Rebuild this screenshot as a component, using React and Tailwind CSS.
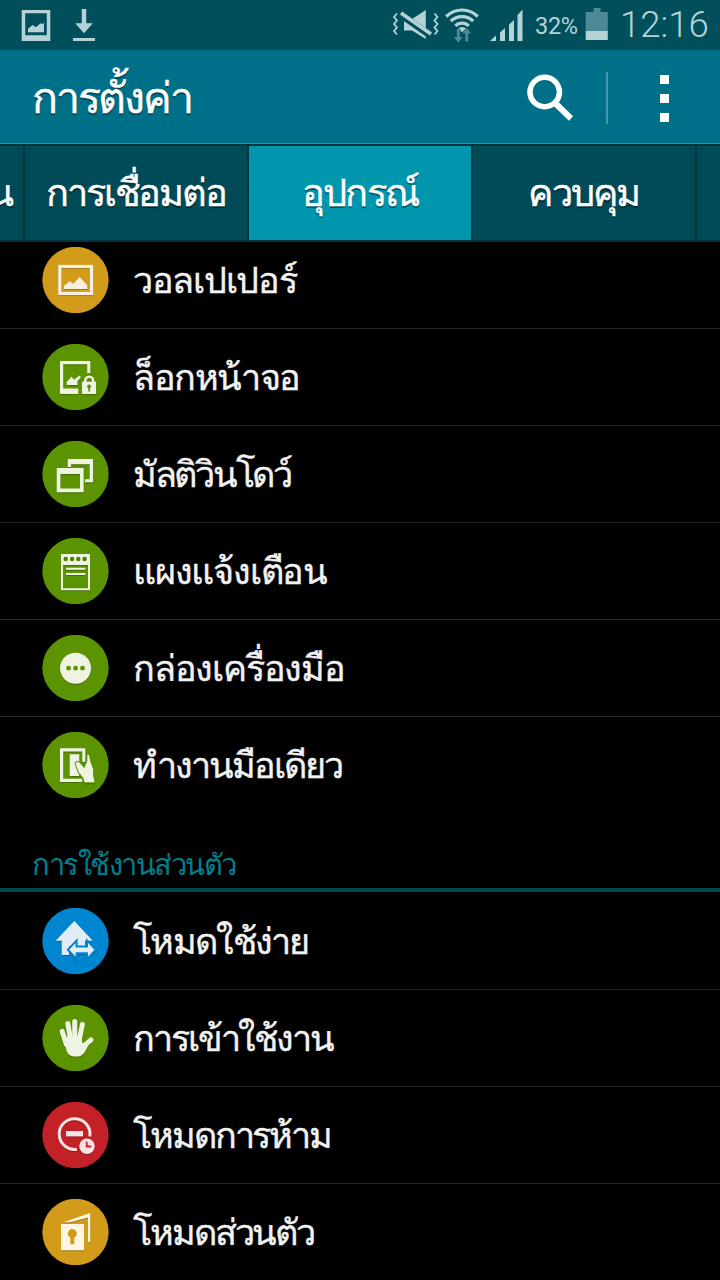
import React from 'react';

const GREEN = '#5b9400';
const AMBER = '#d39b1a';
const BLUE = '#0086d1';
const RED = '#c22227';
const WHITE = '#eef3e2';

/**
 * Round settings icon. Children are drawn in a 67x66 box over the coloured
 * disc, with a thin shadow below them.
 */
function Badge({ color, children }) {
  return (
    <svg className="h-[66px] w-[67px] shrink-0" viewBox="0 0 67 66">
      <circle cx="33.5" cy="33" r="33.2" fill={color} />
      <g className="drop-shadow-[0_1px_0_rgba(0,0,0,0.25)]">{children}</g>
    </svg>
  );
}

function WallpaperIcon() {
  return (
    <Badge color={AMBER}>
      <rect x="17.8" y="19.5" width="31.7" height="27" fill="none" stroke="#f8f0dc" strokeWidth="3.2" />
      <path d="M22 42v-3l5.7-4.7 3.6 2.4L37.7 30l7.6 8.3V42z" fill="#f8f0dc" />
    </Badge>
  );
}

function LockScreenIcon() {
  return (
    <Badge color={GREEN}>
      <path d="M18 17h30.3v12.3h-3.1v-9.1H21.2v24.2h15.1V50H18z" fill={WHITE} />
      <path d="M24.7 41v-3l4.8-5.2 2.6 3 3-2.6 2.6-1.6 1.2 1.6-1.8 2.4-1.6 1.4V41z" fill={WHITE} />
      <path d="M43.3 38v-1.4a3.9 3.9 0 0 1 7.8 0V38" fill="none" stroke={WHITE} strokeWidth="2.6" />
      <rect x="40" y="37.7" width="14" height="12.3" fill={WHITE} />
      <circle cx="47.1" cy="42.4" r="1.9" fill={GREEN} />
      <path d="M46.3 43h1.7v4.4h-1.7z" fill={GREEN} />
    </Badge>
  );
}

function MultiWindowIcon() {
  return (
    <Badge color={GREEN}>
      <path d="M25.7 18H51v23.3h-8v-3h4.6V23.3H29v2.7h-3.3z" fill={WHITE} />
      <path fillRule="evenodd" d="M14.7 27h27v24.3h-27zM18.4 33v14.4H38V33z" fill={WHITE} />
    </Badge>
  );
}

function NotificationIcon() {
  return (
    <Badge color={GREEN}>
      <path fillRule="evenodd" d="M19 16h29v36.3H19zM21 27v23.2h25V27z" fill={WHITE} />
      <circle cx="23.7" cy="21" r="2.2" fill="#4d7d00" />
      <circle cx="30.1" cy="21" r="2.2" fill="#4d7d00" />
      <circle cx="36.3" cy="21" r="2.2" fill="#4d7d00" />
      <circle cx="42.6" cy="21" r="2.2" fill="#4d7d00" />
      <path d="M24 30.7h19.3M24 35.9h19.3" stroke={WHITE} strokeWidth="2" />
    </Badge>
  );
}

function ToolboxIcon() {
  return (
    <Badge color={GREEN}>
      <circle cx="33.5" cy="33.2" r="15.5" fill={WHITE} />
      <circle cx="26.6" cy="33.2" r="2.4" fill={GREEN} />
      <circle cx="33.6" cy="33.2" r="2.4" fill={GREEN} />
      <circle cx="40.5" cy="33.2" r="2.4" fill={GREEN} />
    </Badge>
  );
}

function OneHandIcon() {
  return (
    <Badge color={GREEN}>
      <path d="M18 16.3h25.3V30h-3V19.5H21.2v27.3h19V50H18z" fill={WHITE} />
      <path d="M27.7 22.3h9.6V44h-9.6z" fill={WHITE} />
      <path
        d="M33.6 31.6c0-1.6 2.6-2.4 4-.8l4.8 5.4.6-1.6 2.3-5.4V23.6c.2-1.2 1.5-1 1.8 0l1.2 6 2.8 7.6v6.4l1.4 6.6H42.6l-1.4-4.4-4.6-5.8z"
        fill={WHITE}
        stroke={GREEN}
        strokeWidth="2"
        paintOrder="stroke"
      />
    </Badge>
  );
}

function EasyModeIcon() {
  return (
    <Badge color={BLUE}>
      <path d="M32.3 13l18.4 19.7H43V38H27v9h-7.300V32.700h-6z" fill="#e1ecf7" />
      <path
        d="M27.200 41.800l6.400-6.800v4.400h12.400V35l6.400 6.800-6.400 6.800v-4.400H33.600v4.400z"
        fill="#e1ecf7"
        stroke={BLUE}
        strokeWidth="4"
        paintOrder="stroke"
      />
    </Badge>
  );
}

function AccessibilityIcon() {
  return (
    <Badge color={GREEN}>
      <g fill="none" stroke={WHITE} strokeWidth="5" strokeLinecap="round">
        <path d="M20.200 26.400l4.200 13" />
        <path d="M25.800 18.600l2.800 16" />
        <path d="M32.700 16.600v18" />
        <path d="M40.400 19.400l-3.400 16" />
        <path d="M49 34.800l-4.600 4-5 8" />
      </g>
      <path
        d="M22 36l3.600-5h14.200l.4 7 3.600-.6 2.400 3.200-3.400 6.400c-2.400 3.600-5.200 4.600-8.800 4.600-5.200 0-8.400-1.800-9.600-6.600z"
        fill={WHITE}
      />
    </Badge>
  );
}

function BlockingIcon() {
  return (
    <Badge color={RED}>
      <path d="M34.800 47.300A15.400 15.400 0 1 1 47.800 34.600" fill="none" stroke="#fbe3e1" strokeWidth="3" />
      <path d="M24 29h17v5.400H24z" fill="#fbe3e1" />
      <circle cx="45" cy="44.300" r="7.700" fill="#fbe3e1" />
      <path d="M44.700 39.500v5h4.600" fill="none" stroke={RED} strokeWidth="1.800" />
    </Badge>
  );
}

function PrivateModeIcon() {
  return (
    <Badge color={AMBER}>
      <path d="M21.500 23.200L48.200 14v28.600l-2.200 1V18.400l-18 4.800z" fill="#fdf6e3" />
      <path d="M19 25h23v26.300H19z" fill="#fdf6e3" />
      <circle cx="30.300" cy="34.600" r="4.500" fill={AMBER} />
      <path d="M28.300 36h4v9.300h-4z" fill={AMBER} />
    </Badge>
  );
}

const deviceItems = [
  { label: 'วอลเปเปอร์', Icon: WallpaperIcon, tracking: 'tracking-[-1.3px]' },
  { label: 'ล็อกหน้าจอ', Icon: LockScreenIcon, tracking: 'tracking-[-1.4px]' },
  { label: 'มัลติวินโดว์', Icon: MultiWindowIcon, tracking: 'tracking-[-2.3px]' },
  { label: 'แผงแจ้งเตือน', Icon: NotificationIcon, tracking: 'tracking-[-1.2px]' },
  { label: 'กล่องเครื่องมือ', Icon: ToolboxIcon, tracking: 'tracking-[-1.2px]' },
  { label: 'ทำงานมือเดียว', Icon: OneHandIcon, tracking: 'tracking-[-1.95px]' },
];

const personalItems = [
  { label: 'โหมดใช้ง่าย', Icon: EasyModeIcon, tracking: 'tracking-[-1.7px]' },
  { label: 'การเข้าใช้งาน', Icon: AccessibilityIcon, tracking: 'tracking-[-2.1px]' },
  { label: 'โหมดการห้าม', Icon: BlockingIcon, tracking: 'tracking-[-2.1px]' },
  { label: 'โหมดส่วนตัว', Icon: PrivateModeIcon, tracking: 'tracking-[-2.1px]' },
];

function SettingsList({ items }) {
  return (
    <ul>
      {items.map(({ label, Icon, tracking }) => (
        <li
          key={label}
          className="flex h-[97px] items-center gap-6 border-b border-[#262626] pl-[42px] last:border-transparent"
        >
          <Icon />
          <span
            className={`pt-[2px] text-[36px] leading-[48px] whitespace-nowrap text-[#f2f2f2] [-webkit-text-stroke:0.4px_#f2f2f2] ${tracking}`}
          >
            {label}
          </span>
        </li>
      ))}
    </ul>
  );
}

function StatusBar() {
  return (
    <div className="flex h-[50px] items-center bg-[#004f5b] font-['Roboto',sans-serif] text-[#b5d3d7]">
      <svg className="ml-[21px] h-[34px] w-[30px]" viewBox="0 0 30 34" fill="#b5d3d7">
        <path fillRule="evenodd" d="M.7 2h28.600v31H.7zM4.200 5.200v22h21.600v-22z" />
        <path d="M7 24.200v-3.400l4.700-3.800 3.300 2.200 4.600-4 1.700 1 1.700-1.600v9.600z" />
      </svg>
      <svg className="ml-[21px] h-[34px] w-[24px]" viewBox="0 0 24 34" fill="#b5d3d7">
        <path d="M9.800 1h4.400v14.300h6.600L12 25.300 3.200 15.300h6.600zM1 30h22v3H1z" />
      </svg>

      <svg className="ml-[296px] h-[34px] w-[48px]" viewBox="0 0 48 34" fill="#b5d3d7">
        <path d="M5 5.500L2 9l3 3.500L2 16l3 3.500L2 23l3 3.500" fill="none" stroke="#b5d3d7" strokeWidth="1.800" />
        <path d="M42.500 5.500l3 3.500-3 3.500 3 3.500-3 3.500 3 3.500-3 3.500" fill="none" stroke="#b5d3d7" strokeWidth="1.800" />
        <path d="M12 11h8L33.800 2v29L20 22.500h-8z" />
        <path d="M8.500 6.500l30 21" stroke="#004f5b" strokeWidth="7" />
        <path d="M9 5l30 21" stroke="#b5d3d7" strokeWidth="3.600" />
      </svg>
      <svg className="ml-[5px] h-[36px] w-[34px]" viewBox="0 0 34 36">
        <g fill="none" stroke="#b5d3d7" strokeWidth="3.200">
          <path d="M1.200 9.500a22.400 22.400 0 0 1 31.600 0" />
          <path d="M5.800 14.200a16 16 0 0 1 22.400 0" />
          <path d="M10.300 18.800a9.500 9.500 0 0 1 13.400 0" />
        </g>
        <path d="M12.800 21.600a6 6 0 0 1 8.400 0L17 25.200z" fill="#b5d3d7" />
        <path
          d="M11.800 22h3v8h3l-4.500 5.500L8.800 30h3zM20.200 34.500h3v-8h3L21.700 21l-4.500 5.500h3z"
          fill="#4c8b96"
          stroke="#004f5b"
          strokeWidth="1"
          paintOrder="stroke"
        />
      </svg>
      <svg className="ml-[10px] h-[34px] w-[36px]" viewBox="0 0 36 34" fill="#b5d3d7">
        <path d="M1 33L7 27.500V33zM11 24.500l5-4.500v13h-5zM20 16.500l5-4.500v21h-5zM28.500 7l5-5.500V33h-5z" />
      </svg>
      <span className="ml-[10px] w-[45px] pt-[2px] text-[23.500px] leading-[28px] tracking-[-0.3px]">32%</span>
      <svg className="ml-[5px] h-[34px] w-[24px]" viewBox="0 0 24 34">
        <path d="M8.500 0h7v4h7.300v19H.7V4h7.800z" fill="#4c8b96" />
        <path d="M.7 23h22.100v9H.7z" fill="#b5d3d7" />
      </svg>
      <span className="ml-[11px] text-[36.500px] leading-[40px] font-light whitespace-nowrap">12:16</span>
    </div>
  );
}

function ActionBar() {
  return (
    <header className="flex h-[94px] items-center border-b border-[#2a8fa0] bg-[#007089] pt-[3px]">
      <h1 className="ml-8 w-[480px] text-[43px] leading-[60px] tracking-[-2.200px] whitespace-nowrap text-white [text-shadow:0_2px_1px_rgba(0,0,0,0.4)] [-webkit-text-stroke:0.4px_#fff]">
        การตั้งค่า
      </h1>
      <svg className="ml-[12px] h-[50px] w-[52px]" viewBox="0 0 52 50" fill="none" stroke="#fff">
        <circle cx="20.700" cy="19" r="14.700" strokeWidth="5.600" />
        <path d="M31 30l16 15.500" strokeWidth="6" />
      </svg>
      <div className="ml-[30px] h-[52px] w-[2px] bg-[#4598a9]" />
      <div className="ml-[52px] flex flex-col gap-[10px]">
        <i className="size-[9px] bg-white" />
        <i className="size-[9px] bg-white" />
        <i className="size-[9px] bg-white" />
      </div>
    </header>
  );
}

function Tabs() {
  return (
    <nav className="flex h-[98px] overflow-hidden border-t-2 border-b-2 border-[#00343d] bg-[#004b57] text-[38px] leading-[94px] tracking-[-1.700px] whitespace-nowrap text-white [text-shadow:0_2px_1px_rgba(0,0,0,0.45)] [-webkit-text-stroke:0.4px_#fff]">
      <div className="flex w-[25px] shrink-0 justify-end border-r-2 border-[#00343d] pr-[11px]">น</div>
      <div className="w-[224px] shrink-0 border-r-2 border-[#00343d] text-center tracking-[-2.100px]">การเชื่อมต่อ</div>
      <div className="w-[222px] shrink-0 bg-[#0096ae] text-center">อุปกรณ์</div>
      <div className="w-[226px] shrink-0 border-r-2 border-l-2 border-[#00343d] text-center">ควบคุม</div>
    </nav>
  );
}

export default function App() {
  return (
    <div className="flex h-[1280px] w-[720px] flex-col overflow-hidden bg-black font-['Roboto','Noto_Sans',sans-serif]">
      <StatusBar />
      <ActionBar />
      <Tabs />
      <main className="min-h-0 flex-1 overflow-hidden">
        <div className="-mt-[10px]">
          <SettingsList items={deviceItems} />
          <h2 className="flex h-[78px] items-end border-b-4 border-[#00474f] pb-[3px] pl-8 text-[29px] leading-[40px] tracking-[-1.500px] text-[#00808f]">
            การใช้งานส่วนตัว
          </h2>
          <div className="pt-px">
            <SettingsList items={personalItems} />
          </div>
        </div>
      </main>
    </div>
  );
}
